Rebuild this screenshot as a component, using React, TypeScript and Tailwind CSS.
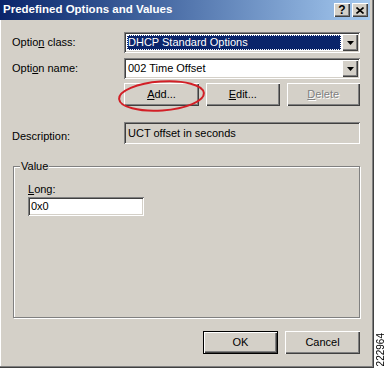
import type { ReactNode } from 'react'

const font = "font-['Liberation_Sans',Arial,sans-serif]"
const raised = 'shadow-[inset_1px_1px_0_#fff,inset_-1px_-1px_0_#404040,inset_-2px_-2px_0_#808080]'
const sunken = 'shadow-[inset_1px_1px_0_#808080,inset_-1px_-1px_0_#fff,inset_2px_2px_0_#404040,inset_-2px_-2px_0_#d4d0c8]'

const Button = ({ children, isDefault, disabled }: { children: ReactNode; isDefault?: boolean; disabled?: boolean }) => (
  <button
    className={`flex h-[23px] w-[75px] items-center justify-center bg-[#d4d0c8] leading-none ${raised} ${isDefault ? 'border border-black' : ''} ${disabled ? 'text-[#808080] [text-shadow:1px_1px_0_#fff]' : 'text-black'}`}
    type="button"
  >
    {children}
  </button>
)

const Arrow = () => (
  <svg width="7" height="4" viewBox="0 0 7 4">
    <path d="M0 0h7L3.5 4z" fill="#000" />
  </svg>
)

const Combo = ({ value, selected }: { value: string; selected?: boolean }) => (
  <div className={`flex h-[21px] items-stretch bg-white p-[2px] ${sunken}`}>
    <div className="flex flex-1 items-stretch p-px">
      <span
        className={`flex flex-1 items-center pl-[1px] ${selected ? 'bg-[#0a246a] text-white outline-1 outline-dotted outline-[#fff] -outline-offset-1' : 'text-black'}`}
      >
        {value}
      </span>
    </div>
    <span className={`flex w-[16px] items-center justify-center bg-[#d4d0c8] ${raised}`}>
      <Arrow />
    </span>
  </div>
)

const TitleButton = ({ children }: { children: ReactNode }) => (
  <span className={`flex h-[14px] w-[16px] items-center justify-center bg-[#d4d0c8] text-[12px] font-bold leading-none text-black ${raised}`}>
    {children}
  </span>
)

export default function App() {
  return (
    <div className={`flex h-[368px] w-[387px] bg-white text-[11px] ${font}`}>
      <div className="flex w-[374px] flex-col border-r border-b border-[#404040] bg-[#d4d0c8] pr-[3px] pb-[3px] shadow-[inset_-1px_-1px_0_#808080,inset_1px_0_0_#fff]">
        <div className="flex h-[20px] items-center justify-between bg-gradient-to-r from-[#0a246a] to-[#a6caf0] pl-[3px] pr-[2px]">
          <span className="text-[11.5px] font-bold leading-none text-white">Predefined Options and Values</span>
          <div className="flex gap-[2px]">
            <TitleButton>?</TitleButton>
            <TitleButton>
              <svg width="8" height="7" viewBox="0 0 8 7">
                <path d="M0.5 0.5l7 6M7.5 0.5l-7 6" stroke="#000" strokeWidth="1.6" />
              </svg>
            </TitleButton>
          </div>
        </div>

        <div className="flex flex-1 flex-col pt-[12px] pl-[12px] pr-[10px]">
          <div className="grid grid-cols-[112px_1fr] items-center">
            <span>
              Optio<u>n</u> class:
            </span>
            <Combo value="DHCP Standard Options" selected />
          </div>
          <div className="mt-[5px] grid grid-cols-[112px_1fr] items-center">
            <span>
              Opti<u>o</u>n name:
            </span>
            <Combo value="002 Time Offset" />
          </div>

          <div className="mt-[4px] flex gap-[7px] pl-[112px]">
            <div className="relative">
              <Button>
                <u>A</u>dd...
              </Button>
              <svg className="pointer-events-none absolute -top-[4px] -left-[7px]" width="90" height="36" viewBox="0 0 90 36">
                <ellipse cx="44.5" cy="17" rx="42.5" ry="14.5" transform="rotate(-4 44.5 17)" fill="none" stroke="#d21f26" strokeWidth="2" />
              </svg>
            </div>
            <Button>
              <u>E</u>dit...
            </Button>
            <Button disabled>
              <u>D</u>elete
            </Button>
          </div>

          <div className="mt-[16px] grid grid-cols-[112px_1fr]">
            <span className="pt-[6px]">Description:</span>
            <div className={`h-[22px] bg-[#d4d0c8] px-[4px] pt-[3px] ${sunken}`}>UCT offset in seconds</div>
          </div>

          <div className="relative mt-[21px] ml-[1px] h-[152px] border border-[#808080] pt-[15px] pl-[14px] shadow-[1px_1px_0_#fff,inset_1px_1px_0_#fff]">
            <span className="absolute -top-[8px] left-[6px] bg-[#d4d0c8] px-[1px] leading-[15px]">Value</span>
            <div className="leading-[15px]">
              <u>L</u>ong:
            </div>
            <div className={`flex h-[19px] w-[116px] items-center bg-white px-[3px] ${sunken}`}>0x0</div>
          </div>

          <div className="mt-[13px] flex justify-end gap-[7px]">
            <Button isDefault>OK</Button>
            <Button>Cancel</Button>
          </div>
        </div>
      </div>
      <div className="flex flex-1 items-end justify-center pb-[2px]">
        <span className="rotate-180 text-[10px] leading-none text-black [writing-mode:vertical-rl]">222964</span>
      </div>
    </div>
  )
}
